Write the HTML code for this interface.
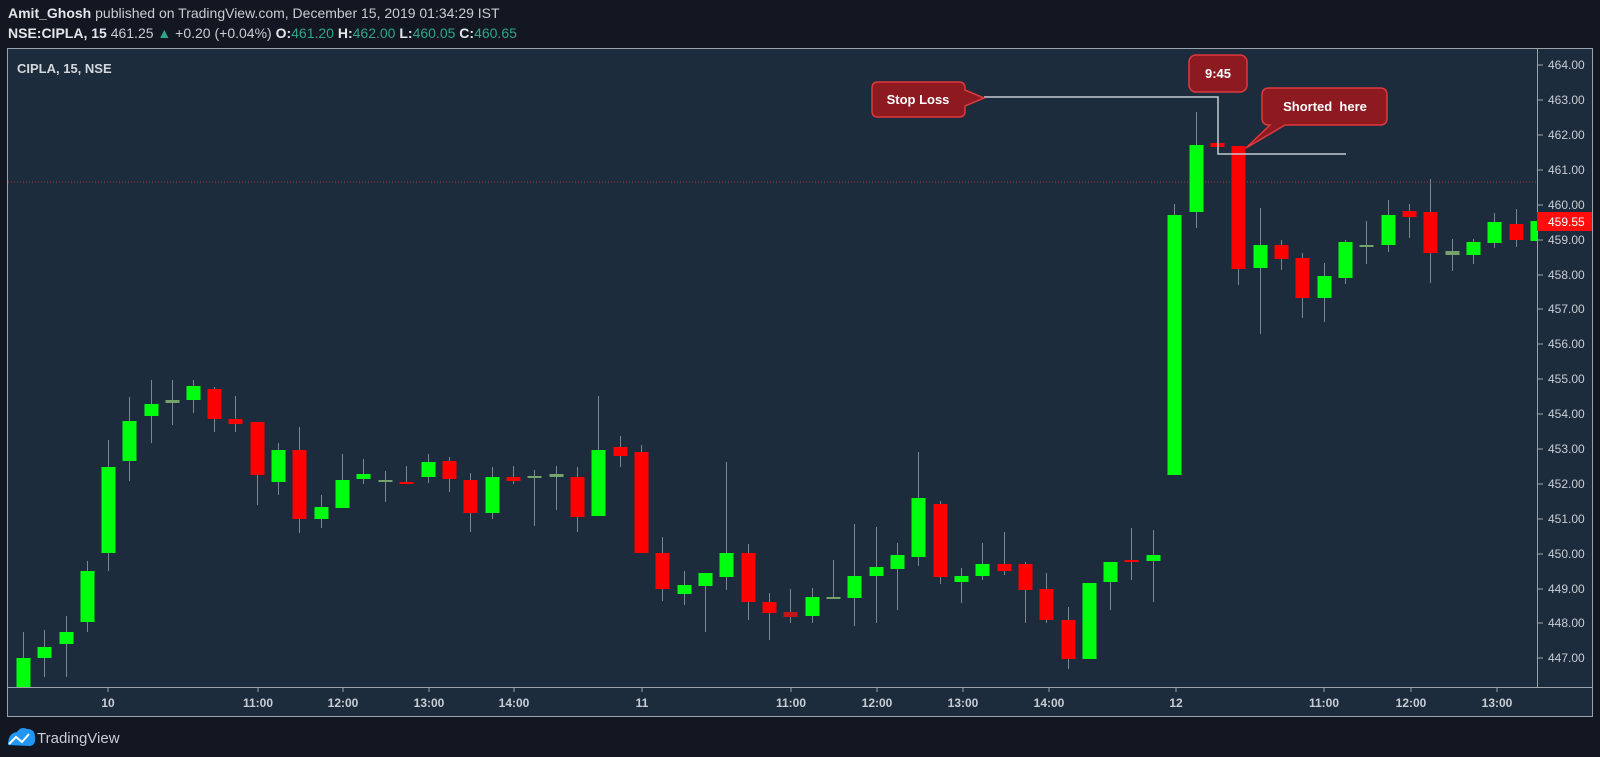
<!DOCTYPE html>
<html><head><meta charset="utf-8"><style>
html,body{margin:0;padding:0;background:#131722;width:1600px;height:757px;overflow:hidden;font-family:"Liberation Sans",sans-serif;}
.h{position:absolute;left:8px;font-size:14px;color:#c9ccd2;white-space:nowrap}
.h b{color:#e4e6ea}
.g{color:#2fa58a}
</style></head><body>
<div class="h" style="top:5px"><b>Amit_Ghosh</b> published on TradingView.com, December 15, 2019 01:34:29 IST</div>
<div class="h" style="top:25px"><b>NSE:CIPLA, 15</b> 461.25 <span class="g">▲</span> +0.20 (+0.04%) <b>O:</b><span class="g">461.20</span> <b>H:</b><span class="g">462.00</span> <b>L:</b><span class="g">460.05</span> <b>C:</b><span class="g">460.65</span></div>
<svg width="1600" height="757" style="position:absolute;left:0;top:0" xmlns="http://www.w3.org/2000/svg">
<defs><clipPath id="c"><rect x="8" y="49" width="1529" height="638"/></clipPath></defs>
<rect x="7.5" y="48.5" width="1585" height="668" fill="#1d2c3c" stroke="#9aa3ad"/>
<line x1="1537.5" y1="48" x2="1537.5" y2="687" stroke="#9aa3ad"/>
<line x1="7" y1="687.5" x2="1592" y2="687.5" stroke="#9aa3ad"/>
<text x="17" y="73" fill="#d4d7dc" font-size="13" font-weight="bold">CIPLA, 15, NSE</text>
<line x1="8" y1="182" x2="1537" y2="182" stroke="#a8353a" stroke-dasharray="1,2"/>
<g clip-path="url(#c)">
<path stroke="#7c8590" stroke-width="1" fill="none" d="M23.5 632V687M44.5 630V677M66.5 616V677M87.5 561V632M108.5 440V571M129.5 397V481M151.5 380V443M172.5 380V425M193.5 380V413M214.5 387V432M235.5 396V432M257.5 422V505M278.5 443V495M299.5 427V533M321.5 495V528M342.5 454V508M363.5 459V484M385.5 471V502M406.5 466V484M428.5 454V483M449.5 457V492M470.5 473V532M492.5 467V519M513.5 466V484M534.5 470V526M556.5 466V510M577.5 467V532M598.5 396V516M620.5 436V467M641.5 445V553M662.5 537V601M684.5 571V605M705.5 573V632M726.5 462V590M748.5 544V620M769.5 593V640M790.5 589V623M812.5 588V623M833.5 560V598M854.5 524V626M876.5 527V623M897.5 543V610M918.5 452V566M940.5 501V584M961.5 568V603M982.5 543V580M1004.5 532V575M1025.5 562V623M1046.5 573V623M1068.5 607V669M1089.5 583V659M1110.5 562V610M1131.5 528V580M1153.5 530V602M1174.5 204V475M1196.5 112V228M1217.5 143V147M1238.5 146V285M1260.5 208V334M1281.5 240V270M1302.5 253V318M1324.5 263V322M1345.5 240V284M1366.5 221V264M1388.5 200V252M1409.5 204V238M1430.5 179V283M1452.5 239V271M1473.5 239V264M1494.5 213V248M1516.5 209V247M1537.5 210V248"/>
<g fill="#00ff0f">
<rect x="16.5" y="658" width="14" height="29"/><rect x="37.5" y="647" width="14" height="11"/><rect x="59.5" y="632" width="14" height="12"/><rect x="80.5" y="571" width="14" height="51"/><rect x="101.5" y="467" width="14" height="86"/><rect x="122.5" y="421" width="14" height="40"/><rect x="144.5" y="404" width="14" height="12"/><rect x="186.5" y="386" width="14" height="14"/><rect x="271.5" y="450" width="14" height="32"/><rect x="314.5" y="507" width="14" height="12"/><rect x="335.5" y="480" width="14" height="28"/><rect x="356.5" y="474" width="14" height="5"/><rect x="421.5" y="462" width="14" height="15"/><rect x="485.5" y="477" width="14" height="36"/><rect x="591.5" y="450" width="14" height="66"/><rect x="677.5" y="585" width="14" height="9"/><rect x="698.5" y="573" width="14" height="13"/><rect x="719.5" y="553" width="14" height="24"/><rect x="805.5" y="597" width="14" height="19"/><rect x="847.5" y="576" width="14" height="22"/><rect x="869.5" y="567" width="14" height="9"/><rect x="890.5" y="555" width="14" height="14"/><rect x="911.5" y="498" width="14" height="59"/><rect x="954.5" y="576" width="14" height="6"/><rect x="975.5" y="564" width="14" height="12"/><rect x="1082.5" y="583" width="14" height="76"/><rect x="1103.5" y="562" width="14" height="20"/><rect x="1146.5" y="555" width="14" height="6"/><rect x="1167.5" y="215" width="14" height="260"/><rect x="1189.5" y="145" width="14" height="67"/><rect x="1253.5" y="245" width="14" height="23"/><rect x="1317.5" y="276" width="14" height="22"/><rect x="1338.5" y="242" width="14" height="36"/><rect x="1381.5" y="215" width="14" height="30"/><rect x="1466.5" y="242" width="14" height="13"/><rect x="1487.5" y="222" width="14" height="21"/><rect x="1530.5" y="221" width="14" height="20"/>
</g>
<g fill="#74a46a">
<rect x="165.5" y="400" width="14" height="3"/><rect x="378.5" y="480" width="14" height="2"/><rect x="527.5" y="476" width="14" height="2"/><rect x="549.5" y="474" width="14" height="3"/><rect x="826.5" y="597" width="14" height="2"/><rect x="1359.5" y="245" width="14" height="2"/><rect x="1445.5" y="251" width="14" height="4"/>
</g>
<g fill="#ff0000">
<rect x="207.5" y="389" width="14" height="30"/><rect x="228.5" y="419" width="14" height="5"/><rect x="250.5" y="422" width="14" height="53"/><rect x="292.5" y="450" width="14" height="69"/><rect x="399.5" y="482" width="14" height="2"/><rect x="442.5" y="461" width="14" height="18"/><rect x="463.5" y="480" width="14" height="33"/><rect x="506.5" y="477" width="14" height="4"/><rect x="570.5" y="477" width="14" height="40"/><rect x="613.5" y="447" width="14" height="9"/><rect x="634.5" y="452" width="14" height="101"/><rect x="655.5" y="553" width="14" height="36"/><rect x="741.5" y="553" width="14" height="49"/><rect x="762.5" y="602" width="14" height="11"/><rect x="933.5" y="504" width="14" height="73"/><rect x="997.5" y="564" width="14" height="7"/><rect x="1018.5" y="564" width="14" height="26"/><rect x="1039.5" y="589" width="14" height="31"/><rect x="1061.5" y="620" width="14" height="39"/><rect x="1124.5" y="560" width="14" height="2"/><rect x="1210.5" y="143" width="14" height="4"/><rect x="1231.5" y="146" width="14" height="123"/><rect x="1274.5" y="245" width="14" height="14"/><rect x="1295.5" y="258" width="14" height="40"/><rect x="1402.5" y="211" width="14" height="6"/><rect x="1423.5" y="212" width="14" height="41"/><rect x="1509.5" y="224" width="14" height="16"/>
</g>
<rect x="783.5" y="612" width="14" height="5" fill="#c4141a"/>
</g>
<g font-size="12" fill="#c8ccd4">
<text x="1548" y="69">464.00</text><text x="1548" y="104">463.00</text><text x="1548" y="139">462.00</text><text x="1548" y="174">461.00</text><text x="1548" y="209">460.00</text><text x="1548" y="244">459.00</text><text x="1548" y="279">458.00</text><text x="1548" y="313">457.00</text><text x="1548" y="348">456.00</text><text x="1548" y="383">455.00</text><text x="1548" y="418">454.00</text><text x="1548" y="453">453.00</text><text x="1548" y="488">452.00</text><text x="1548" y="523">451.00</text><text x="1548" y="558">450.00</text><text x="1548" y="593">449.00</text><text x="1548" y="627">448.00</text><text x="1548" y="662">447.00</text>
</g>
<path stroke="#9aa3ad" d="M1538 65H1543M1538 100H1543M1538 135H1543M1538 170H1543M1538 205H1543M1538 240H1543M1538 275H1543M1538 309H1543M1538 344H1543M1538 379H1543M1538 414H1543M1538 449H1543M1538 484H1543M1538 519H1543M1538 554H1543M1538 589H1543M1538 623H1543M1538 658H1543"/>
<rect x="1537" y="212" width="55" height="19" fill="#ff0d0d"/>
<text x="1548" y="226" font-size="12" fill="#fff">459.55</text>
<polyline points="984,97 1218,97 1218,154 1346,154" stroke="#c3cad2" fill="none" stroke-width="1.5"/>
<g font-weight="bold" font-size="13" fill="#fff">
<path d="M878,82 H959 Q965,82 965,88 V90 L984,98 L965,106 V111 Q965,117 959,117 H878 Q872,117 872,111 V88 Q872,82 878,82 Z" fill="#8c1a20" stroke="#e0383d" stroke-width="1.5"/>
<text x="918" y="104" text-anchor="middle">Stop Loss</text>
<rect x="1189" y="55" width="58" height="37" rx="7" fill="#8c1a20" stroke="#e0383d" stroke-width="1.5"/>
<text x="1218" y="78" text-anchor="middle">9:45</text>
<path d="M1269,88 H1380 Q1387,88 1387,95 V118 Q1387,125 1380,125 H1285 L1246,148 L1270,125 H1269 Q1262,125 1262,118 V95 Q1262,88 1269,88 Z" fill="#8c1a20" stroke="#e0383d" stroke-width="1.5"/>
<text x="1325" y="111" text-anchor="middle" xml:space="preserve">Shorted  here</text>
</g>
<g font-size="12" fill="#c8ccd4" font-weight="bold" text-anchor="middle">
<text x="108" y="707">10</text><text x="258" y="707">11:00</text><text x="343" y="707">12:00</text><text x="429" y="707">13:00</text><text x="514" y="707">14:00</text>
<text x="642" y="707">11</text><text x="791" y="707">11:00</text><text x="877" y="707">12:00</text><text x="963" y="707">13:00</text><text x="1049" y="707">14:00</text>
<text x="1176" y="707">12</text><text x="1324" y="707">11:00</text><text x="1411" y="707">12:00</text><text x="1497" y="707">13:00</text>
</g>
<path stroke="#9aa3ad" d="M108 688V692M258 688V692M343 688V692M429 688V692M514 688V692M642 688V692M791 688V692M877 688V692M963 688V692M1049 688V692M1176 688V692M1324 688V692M1411 688V692M1497 688V692"/>
<path d="M8,745 Q8,733 17,732 Q21,726 27,729 Q35,729 35,737 Q36,745 30,746 Z" fill="#2196f3"/>
<path d="M9,744 L16,737 L22,742 L29,734" stroke="#fff" stroke-width="2" fill="none"/>
<text x="37" y="743" font-size="15" fill="#c8ccd4">TradingView</text>
</svg>
</body></html>
